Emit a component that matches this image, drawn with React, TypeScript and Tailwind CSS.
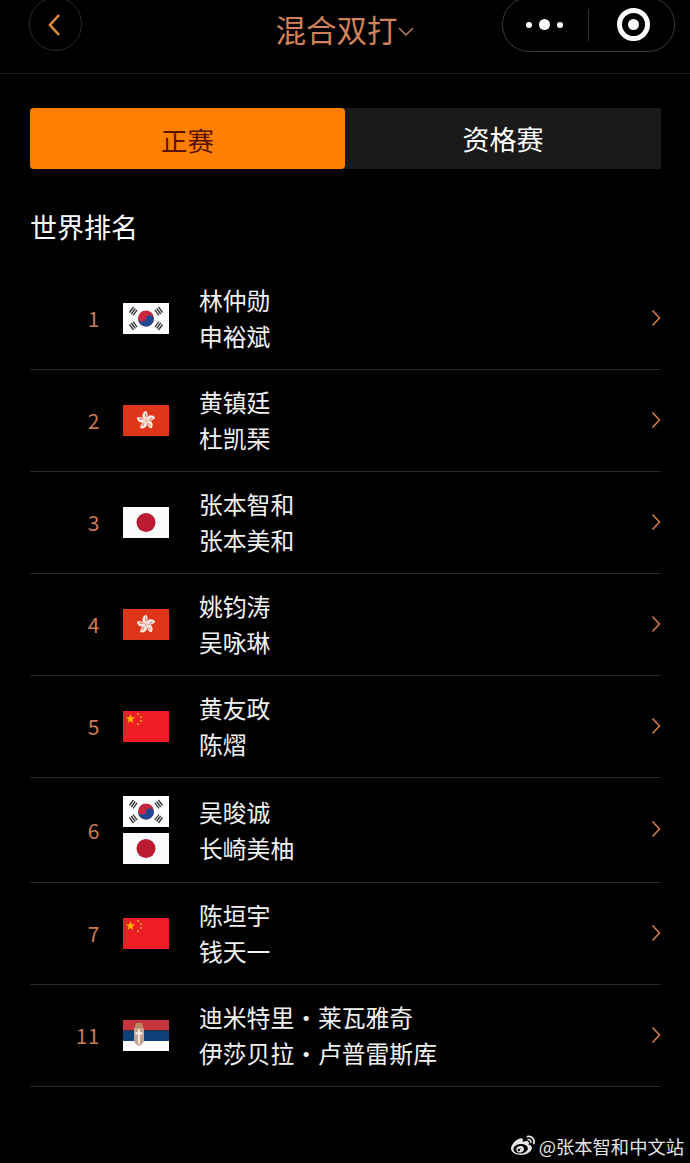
import React from "react";
import { FaWeibo } from "react-icons/fa";

const Korea = () => (
  <svg viewBox="0 0 46 31" className="block w-[46px] h-[31px]">
    <rect width="46" height="31" fill="#fff" />
    <circle cx="23" cy="15.5" r="8" fill="#c8273f" />
    <path d="M15.2 13.7a3.950 3.950 0 0 0 7.800 1.800a3.950 3.950 0 0 1 7.800 1.800a8 8 0 0 1-15.600-3.600z" fill="#1f4a93" />
    <g stroke="#333" strokeWidth="1.300">
      <path d="M6.500 9.500l4-5.500M8.300 11l4-5.500M10.100 12.400l4-5.500" />
      <path d="M39.500 9.500l-4-5.500M37.700 11l-4-5.500M35.900 12.400l-4-5.500" />
      <path d="M6.500 21.500l4 5.500M8.300 20l4 5.500M10.100 18.600l4 5.500" />
      <path d="M39.500 21.500l-4 5.500M37.700 20l-4 5.500M35.900 18.600l-4 5.500" />
    </g>
  </svg>
);
const Japan = () => (
  <svg viewBox="0 0 46 31" className="block w-[46px] h-[31px]">
    <rect width="46" height="31" fill="#fbfbfb" />
    <circle cx="23" cy="15.5" r="9.500" fill="#bc1a33" />
  </svg>
);
const HK = () => (
  <svg viewBox="0 0 46 31" className="block w-[46px] h-[31px]">
    <rect width="46" height="31" fill="#dd3618" />
    <g>
      {[0, 72, 144, 216, 288].map((a) => (
        <g key={a} transform={`rotate(${a} 23 15.5)`}>
          <path d="M23 15.500c-3-1.200-4.300-3.600-3.400-6.200c.5-1.500 1.700-2.700 3.400-3.500c1.300 1.500 1.900 3 1.500 4.700c-.4 1.700-1.700 2.800-1.500 5z" fill="#f8e8e2" />
          <path d="M22.600 8.500l.3 3.500" stroke="#dd3618" strokeWidth="0.700" fill="none" />
        </g>
      ))}
    </g>
  </svg>
);
const China = () => (
  <svg viewBox="0 0 46 31" className="block w-[46px] h-[31px]">
    <rect width="46" height="31" fill="#ee1c25" />
    <path d="M7.500 3l1.200 3.300 3.500.1-2.800 2.200 1 3.400-2.900-2-2.900 2 1-3.400-2.800-2.200 3.500-.1z" fill="#ffb400" />
    <g fill="#f5b820">
      <circle cx="15" cy="3" r="1" />
      <circle cx="18" cy="6" r="1" />
      <circle cx="18" cy="10" r="1" />
      <circle cx="15" cy="13" r="1" />
    </g>
  </svg>
);
const Serbia = () => (
  <svg viewBox="0 0 46 31" className="block w-[46px] h-[31px]">
    <rect width="46" height="10.500" fill="#c6363c" />
    <rect y="10.500" width="46" height="10.500" fill="#0c4076" />
    <rect y="21" width="46" height="10" fill="#fff" />
    <path d="M11 8h10v11.500c0 3.500-2.800 5.500-5 6.500c-2.200-1-5-3-5-6.500z" fill="#c9a08c" />
    <path d="M13 3h6l1.500 5h-9z" fill="#b98a5e" />
    <path d="M15 9h2v15h-2zM12.500 12h7v2.500h-7z" fill="#f3ece6" />
  </svg>
);

const rows: { rank: string; flags: React.ReactNode[]; a: string; b: string; tall?: boolean }[] = [
  { rank: "1", flags: [<Korea key="k" />], a: "林仲勋", b: "申裕斌" },
  { rank: "2", flags: [<HK key="h" />], a: "黄镇廷", b: "杜凯琹" },
  { rank: "3", flags: [<Japan key="j" />], a: "张本智和", b: "张本美和" },
  { rank: "4", flags: [<HK key="h" />], a: "姚钧涛", b: "吴咏琳" },
  { rank: "5", flags: [<China key="c" />], a: "黄友政", b: "陈熠" },
  { rank: "6", flags: [<Korea key="k" />, <Japan key="j" />], a: "吴晙诚", b: "长崎美柚", tall: true },
  { rank: "7", flags: [<China key="c" />], a: "陈垣宇", b: "钱天一" },
  { rank: "11", flags: [<Serbia key="s" />], a: "迪米特里・莱瓦雅奇", b: "伊莎贝拉・卢普雷斯库" },
];

export default function App() {
  return (
    <div className="w-[690px] h-[1163px] bg-black overflow-hidden font-['Noto_Sans_CJK_SC','Noto_Sans',sans-serif] flex flex-col">
      <header className="h-[76px] shrink-0 border-b border-[#1e1e1e] flex items-start pl-[29px] pr-[15px] -mt-[3px] box-content">
        <div className="w-[53px] h-[54px] shrink-0 rounded-full border border-[#2a2a2a] flex items-center justify-center">
          <svg width="16" height="24" viewBox="0 0 16 24" fill="none" stroke="#e08a3c" strokeWidth="2.600" className="mt-[2px] -ml-[2px]">
            <path d="M12 2L3 12l9 10" />
          </svg>
        </div>
        <div className="w-[420px] shrink-0 h-full flex items-center justify-center pl-[108px] pt-[3px] pb-[15px]">
          <span className="text-[30.500px] leading-[40px] text-[#d0825a] ml-[-3px]">混合双打</span>
          <svg width="16" height="10" viewBox="0 0 16 10" fill="none" stroke="#c9805c" strokeWidth="1.400" className="mt-[6px]">
            <path d="M1 1l7 7 7-7" />
          </svg>
        </div>
        <div className="w-[173px] h-[55px] rounded-[27px] border border-[#3a3a3a] flex items-center shrink-0">
          <div className="flex items-center gap-[7px] ml-[23px] w-[61px]">
            <span className="w-[6px] h-[6px] rounded-full bg-white" />
            <span className="w-[11px] h-[11px] rounded-full bg-white" />
            <span className="w-[6px] h-[6px] rounded-full bg-white" />
          </div>
          <span className="w-px h-[32px] bg-[#333] ml-[1px]" />
          <span className="ml-[28px] w-[33px] h-[33px] rounded-full border-[5px] border-white flex items-center justify-center">
            <span className="w-[11px] h-[11px] rounded-full bg-white" />
          </span>
        </div>
      </header>

      <main className="pl-[30px] pr-[29px] pt-[34px]">
        <div className="flex h-[61px] bg-[#1a1a1a]">
          <div className="w-[315px] rounded-[4px] bg-[#ff8000] flex items-center justify-center pt-[2px] text-[26.500px] text-[#5a1208]">正赛</div>
          <div className="flex-1 flex items-center justify-center pt-[2px] text-[27px] text-white">资格赛</div>
        </div>
        <h2 className="mt-[38px] text-[27px] leading-[40px] font-normal text-white">世界排名</h2>

        <ul className="mt-[21px]">
          {rows.map((r) => (
            <li key={r.rank} className={`${r.tall ? "h-[105px]" : "h-[102px]"} border-b border-[#262626] flex items-center`}>
              <span className="w-[70px] text-right text-[21px] tracking-[0.5px] text-[#c97a55] shrink-0 mt-[1px]">{r.rank}</span>
              <div className="ml-[23px] w-[46px] flex flex-col gap-[6px] -mt-[1px] shrink-0">{r.flags}</div>
              <div className="ml-[30px] flex-1 text-[23.800px] leading-[36px] text-[#f2f2f2] -mt-[1px]">
                <div>{r.a}</div>
                <div>{r.b}</div>
              </div>
              <svg width="10" height="18" viewBox="0 0 10 18" fill="none" stroke="#d97f45" strokeWidth="1.500" className="-mt-[2px] shrink-0">
                <path d="M1.500 1.500L8.500 9l-7 7.500" />
              </svg>
            </li>
          ))}
        </ul>
      </main>

      <footer className="mt-[46px] flex items-center justify-end pr-[6px] text-[#e6e6e6] text-[18.300px] leading-[26px]">
        <FaWeibo className="text-[24px] text-[#e8e8e8] mr-[4px]" />
        <span>@张本智和中文站</span>
      </footer>
    </div>
  );
}
